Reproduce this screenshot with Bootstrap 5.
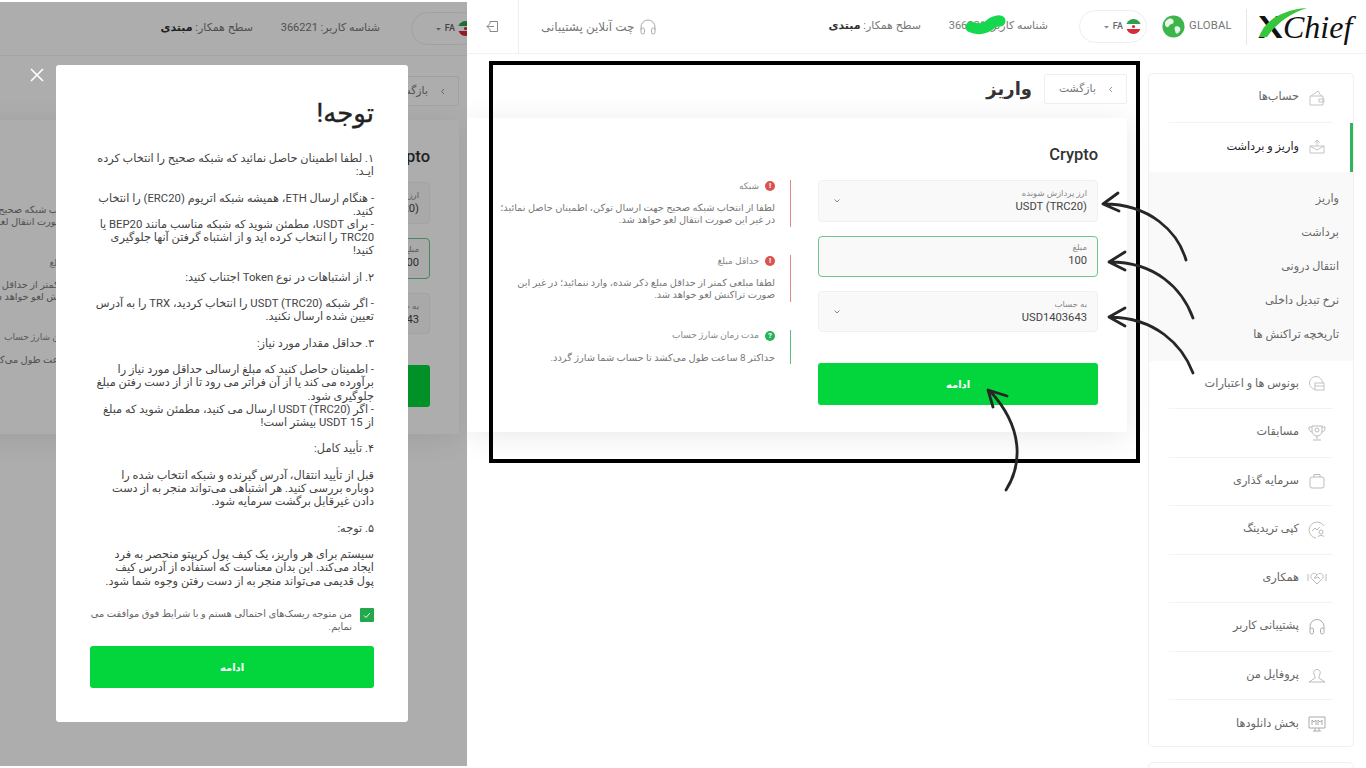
<!DOCTYPE html>
<html lang="fa">
<head>
<meta charset="UTF-8">
<meta name="viewport" content="width=device-width, initial-scale=1.0">
<title>واریز</title>
<link href="https://cdn.jsdelivr.net/npm/bootstrap@5.3.0/dist/css/bootstrap.min.css" rel="stylesheet">
<script src="https://cdn.jsdelivr.net/npm/bootstrap@5.3.0/dist/js/bootstrap.bundle.min.js"></script>
<style>
body { width:1366px; height:768px; overflow:hidden; background:#fff; font-family:Roboto,"DejaVu Sans",sans-serif; color:#777; font-size:10px; }
/* two shots of the same page side by side */
.shot-dim { width:467px; height:768px; padding-top:2px; overflow:hidden; }
.shot-dim .site { margin-left:-201px; }
.dim-layer { top:2px; bottom:2px; left:0; width:467px; background:rgba(0,0,0,.32); }
.shot-main { width:899px; height:768px; overflow:hidden; }
.site { width:899px; flex:none; }

.hdr { height:54px; border-bottom:1px solid #f2f2f2; padding-right:11px; color:#777; font-size:11px; }
.logo-box { width:97px; height:36px; direction:ltr; color:#111; white-space:nowrap; line-height:36px; }
.logo-x { display:inline-block; width:25px; font:700 31px "Liberation Sans",sans-serif; transform:scaleX(1.2); transform-origin:left; }
.logo-c { font:italic 32px "Liberation Serif",serif; }
.logo-swoosh { left:0; top:-9px; }
.hdr-sep { width:1px; height:36px; background:#e6e6e6; margin:0 11px 0 12px; }
.global-box { direction:ltr; gap:4px; font-size:11.3px; color:#777; letter-spacing:.2px; margin-left:15px; width:72px; }
.lang-pill { width:68px; height:33px; border:1px solid #eee; border-radius:17px; direction:ltr; font-size:9px; font-weight:500; color:#666; gap:3px; margin-left:31px; padding-right:5px; justify-content:flex-end; }
.hdr-id { width:100px; white-space:nowrap; margin-left:27px; }
.hdr-level { width:90px; white-space:nowrap; }
.hdr-level b { color:#333; }
.hdr-chat { gap:5px; white-space:nowrap; margin-left:22px; font-size:12px; }
.hdr-out { width:52px; height:54px; border-right:1px solid #eee; }

.body-row { padding-right:12px; padding-top:19px; }
.side-col { width:206px; flex:none; margin-left:21px; }
.side-box { border:1px solid #f0f0f0; border-radius:5px; background:#fff; height:674px; }
.side-box2 { border:1px solid #f0f0f0; border-radius:5px; height:30px; margin-top:15px; }
.side-item { height:48.5px; margin:0 20px; gap:8px; padding-right:6px; font-size:11.3px; color:#666; border-bottom:1px solid #f3f3f3; }
.side-item:last-child { border-bottom:0; }
.side-item svg { flex:none; }
.side-on { height:49px; margin:0; padding-right:26px; border:0; color:#222; }
.side-mark { right:0; top:0; bottom:0; width:3px; background:#2fb457; }
.side-sub { background:#f9f9f9; height:189px; padding:10px 14px 0 0; font-size:11.2px; color:#666; }
.side-sub div { height:34px; line-height:34px; }
.cont-col { width:660px; flex:none; padding-top:1px; }
.back-btn { width:83px; height:30px; border:1px solid #eee; border-radius:2px; background:#fff; padding:0 12px 0 14px; font-size:10.8px; color:#777; }
.page-title { font-size:18px; font-weight:700; color:#333; margin:0 12px 0 0; }
.pay-card { background:#fff; height:314px; margin-top:14px; padding:27px 29px 0 0; box-shadow:0 4px 30px rgba(0,0,0,.09); border-radius:2px; }
.card-name { font-size:16.5px; font-weight:500; color:#333; text-align:right; margin:0 0 15px; line-height:20px; direction:ltr; }
.form-col { width:280px; flex:none; margin-left:27px; }
.fake-field { height:41px; margin-bottom:14px; background:#f9f9f9; border:1px solid #f0f0f0; border-radius:4px; padding:5px 10px; }
.fake-field:first-child { height:42px; }
.fake-field.is-on { border-color:#6fc58a; }
.fld-txt { text-align:right; }
.fld-lab { font-size:8.5px; color:#888; line-height:11px; }
.fld-val { font-size:11.2px; color:#444; line-height:15px; direction:ltr; }
.go-btn { background:#03d63c; color:#fff; font-size:10px; font-weight:700; border:0; border-radius:3px; height:42px; width:100%; }
.go-btn:hover { background:#03d63c; color:#fff; }
.form-col .go-btn { margin-top:17px; }
.info-col { width:292px; flex:none; }
.info-item { padding-right:15px; text-align:right; border-right:1px solid #d98a8a; margin-bottom:28px; font-size:9.8px; line-height:12.4px; white-space:nowrap; color:#777; }
.info-item.is-ok { border-right-color:#5cbf7e; margin-bottom:0; }
.info-head { gap:6px; font-size:9px; color:#888; height:12px; margin-bottom:10px; }
.info-dot { width:10px; height:10px; border-radius:50%; background:#d9534f; color:#fff; font:700 8px/10px Roboto,sans-serif; text-align:center; flex:none; }
.is-ok .info-dot { background:#22b455; }

.notice-box { left:56px; top:65px; width:352px; height:657px; background:#fff; border-radius:3px; padding:32px 34px 0; text-align:right; }
.notice-title { font-size:26px; font-weight:400; color:#222; margin:0 0 23px; line-height:32px; -webkit-text-stroke:.4px #222; }
.notice-text { font-size:11.3px; line-height:13.2px; color:#444; white-space:nowrap; height:455px; }
.notice-agree { gap:8px; font-size:9.9px; line-height:13px; color:#666; margin-bottom:5px; height:34px; white-space:nowrap; }
.notice-check { width:14px; height:14px; background:#22a94c; border-radius:1px; flex:none; margin-top:1px; }
.notice-x { left:29px; top:67px; }
.marks { left:0; top:0; pointer-events:none; }
</style>
</head>
<body class="d-flex position-relative">

<div class="shot-dim position-relative" id="shotDim"></div>

<div class="shot-main" id="shotMain">
  <div class="site" id="sitePage" dir="rtl">
    <header class="hdr d-flex align-items-center">
      <div class="logo-box position-relative">
        <span class="logo-x">X</span><span class="logo-c">Chief</span>
        <svg class="logo-swoosh position-absolute" width="60" height="44" viewBox="0 0 60 44"><path d="M1 37C6 22 22 10 49 8C32 13 18 24 9 37Z" fill="#35c63b"/></svg>
      </div>
      <div class="hdr-sep"></div>
      <div class="global-box d-flex align-items-center">
        <svg width="23" height="23" viewBox="0 0 24 24"><circle cx="12" cy="12" r="11.5" fill="#3cb54a"/><path d="M7 4C10 3 13 5 12 8C11 10 8 9 7 12C6 14 3 12 3 9C3 7 5 5 7 4ZM14 12C17 11 20 13 19 16C18 19 15 21 14 18C14 16 12 14 14 12Z" fill="#e9f7ea"/></svg>
        <span>GLOBAL</span>
      </div>
      <div class="lang-pill d-flex align-items-center">
        <svg width="7" height="6" viewBox="0 0 7 6"><path d="M1 2L3.5 4.5L6 2Z" fill="#888"/></svg>
        <span>FA</span>
        <svg width="15" height="15" viewBox="0 0 15 15"><clipPath id="flagc"><circle cx="7.5" cy="7.5" r="7.5"/></clipPath><g clip-path="url(#flagc)"><rect width="15" height="5" fill="#2aa24a"/><rect y="5" width="15" height="5" fill="#fff"/><rect y="10" width="15" height="5" fill="#d6293a"/><circle cx="7.5" cy="7.5" r="1.6" fill="#d6293a"/></g></svg>
      </div>
      <div class="hdr-id">شناسه کاربر: 366221</div>
      <div class="hdr-level">سطح همکار: <b>مبتدی</b></div>
      <div class="hdr-chat d-flex align-items-center me-auto">
        <svg width="18" height="18" viewBox="0 0 18 18" fill="none" stroke="#aaa"><path d="M2 12V9a7 7 0 0 1 14 0v3"/><rect x="2" y="10" width="3.5" height="6" rx="1.7"/><rect x="12.5" y="10" width="3.5" height="6" rx="1.7"/></svg>
        <span>چت آنلاین پشتیبانی</span>
      </div>
      <div class="hdr-out d-flex align-items-center justify-content-center">
        <svg width="13" height="13" viewBox="0 0 13 13" fill="none" stroke="#888"><path d="M4 1.5H11.5V11.5H4V9M4 4V1.5M8 6.5H1M3.5 4L1 6.5L3.5 9"/></svg>
      </div>
    </header>

    <div class="body-row d-flex">
      <aside class="side-col">
        <div class="side-box">
          <div class="side-item d-flex align-items-center">
            <svg width="20" height="20" viewBox="0 0 20 20" fill="none" stroke="#c4c4c4"><path d="M4 8L11 3L14 8M3 8H16V17H3ZM12 11H17V14H12Z"/></svg>
            <span>حساب‌ها</span>
          </div>
          <div class="side-item side-on d-flex align-items-center position-relative">
            <svg width="20" height="20" viewBox="0 0 20 20" fill="none" stroke="#c4c4c4"><path d="M3 9H17V16H3ZM3 9L10 13L17 9M10 9V3M7.5 5.5L10 3L12.5 5.5"/></svg>
            <span>واریز و برداشت</span>
            <span class="side-mark position-absolute"></span>
          </div>
          <div class="side-sub">
            <div>واریز</div>
            <div>برداشت</div>
            <div>انتقال درونی</div>
            <div>نرخ تبدیل داخلی</div>
            <div>تاریخچه تراکنش ها</div>
          </div>
          <div class="side-item d-flex align-items-center">
            <svg width="20" height="20" viewBox="0 0 20 20" fill="none" stroke="#c4c4c4"><circle cx="9" cy="9" r="6.5"/><rect x="8" y="9" width="9" height="7" fill="#fff"/><path d="M8 12H17"/></svg>
            <span>بونوس ها و اعتبارات</span>
          </div>
          <div class="side-item d-flex align-items-center">
            <svg width="20" height="20" viewBox="0 0 20 20" fill="none" stroke="#bbb"><path d="M5 3H15V8A5 5 0 0 1 5 8ZM5 4H2V6C2 8 4 9 5 9M15 4H18V6C18 8 16 9 15 9M10 13V16M6 17H14"/><circle cx="10" cy="7" r="2"/></svg>
            <span>مسابقات</span>
          </div>
          <div class="side-item d-flex align-items-center">
            <svg width="20" height="20" viewBox="0 0 20 20" fill="none" stroke="#bbb"><rect x="3" y="6" width="14" height="11" rx="2"/><path d="M7 6V3.5H13V6"/></svg>
            <span>سرمایه گذاری</span>
          </div>
          <div class="side-item d-flex align-items-center">
            <svg width="20" height="20" viewBox="0 0 20 20" fill="none" stroke="#bbb"><path d="M17 6A8 8 0 1 0 9 18M5 11L8 8L10 10L13 7"/><circle cx="14" cy="12" r="2"/><path d="M11 17C11 15 17 15 17 17"/></svg>
            <span>کپی تریدینگ</span>
          </div>
          <div class="side-item d-flex align-items-center">
            <svg width="20" height="20" viewBox="0 0 20 20" fill="none" stroke="#bbb"><path d="M1 6V13M19 6V13M10 16L4.5 10.5C2 7 7 3 10 7C13 3 18 7 15.5 10.5ZM10 7L7 10H9L11 9L13 11"/></svg>
            <span>همکاری</span>
          </div>
          <div class="side-item d-flex align-items-center">
            <svg width="20" height="20" viewBox="0 0 20 20" fill="none" stroke="#aaa"><path d="M3 12V9.5a7 7 0 0 1 14 0V12"/><rect x="3" y="11" width="3.5" height="6" rx="1.7"/><rect x="13.5" y="11" width="3.5" height="6" rx="1.7"/></svg>
            <span>پشتیبانی کاربر</span>
          </div>
          <div class="side-item d-flex align-items-center">
            <svg width="20" height="20" viewBox="0 0 20 20" fill="none" stroke="#bbb"><path d="M7 9C5 3 15 3 13 9C12.500 11 11.500 12 12 13L18 17H2L8 13C8.500 12 7.500 11 7 9Z"/></svg>
            <span>پروفایل من</span>
          </div>
          <div class="side-item d-flex align-items-center">
            <svg width="20" height="20" viewBox="0 0 20 20" fill="none" stroke="#aaa"><path d="M2 3H18V14H2ZM8 14V17M12 14V17M6 17H14M5 11V6L7 8L9 6V11M11 11V6L13 8L15 6V11"/></svg>
            <span>بخش دانلودها</span>
          </div>
        </div>
        <div class="side-box2"></div>
      </aside>

      <main class="cont-col">
        <div class="d-flex align-items-center">
          <a class="back-btn d-flex align-items-center justify-content-between text-decoration-none">
            <svg width="6" height="7" viewBox="0 0 6 7" fill="none" stroke="#999"><path d="M4 1L1.500 3.500L4 6"/></svg>
            <span>بازگشت</span>
          </a>
          <h1 class="page-title">واریز</h1>
        </div>
        <section class="pay-card">
          <h2 class="card-name">Crypto</h2>
          <div class="d-flex">
            <div class="form-col">
              <div class="fake-field d-flex align-items-center justify-content-between">
                <div class="fld-txt"><div class="fld-lab">ارز پردازش شونده</div><div class="fld-val">USDT (TRC20)</div></div>
                <svg class="ms-1" width="8" height="6" viewBox="0 0 8 6" fill="none" stroke="#888"><path d="M1.500 1.500L4 4L6.500 1.500"/></svg>
              </div>
              <div class="fake-field is-on">
                <div class="fld-txt"><div class="fld-lab">مبلغ</div><div class="fld-val">100</div></div>
              </div>
              <div class="fake-field d-flex align-items-center justify-content-between">
                <div class="fld-txt"><div class="fld-lab">به حساب</div><div class="fld-val">USD1403643</div></div>
                <svg class="ms-1" width="8" height="6" viewBox="0 0 8 6" fill="none" stroke="#888"><path d="M1.500 1.500L4 4L6.500 1.500"/></svg>
              </div>
              <button class="btn go-btn" type="button">ادامه</button>
            </div>
            <div class="info-col">
              <div class="info-item">
                <div class="info-head d-flex align-items-center"><span class="info-dot">!</span><span>شبکه</span></div>
                لطفا از انتخاب شبکه صحیح جهت ارسال توکن، اطمینان حاصل نمائید؛<br>در غیر این صورت انتقال لغو خواهد شد.
              </div>
              <div class="info-item">
                <div class="info-head d-flex align-items-center"><span class="info-dot">!</span><span>حداقل مبلغ</span></div>
                لطفا مبلغی کمتر از حداقل مبلغ ذکر شده، وارد ننمائید؛ در غیر این<br>صورت تراکنش لغو خواهد شد.
              </div>
              <div class="info-item is-ok">
                <div class="info-head d-flex align-items-center"><span class="info-dot">?</span><span>مدت زمان شارژ حساب</span></div>
                حداکثر 8 ساعت طول می‌کشد تا حساب شما شارژ گردد.
              </div>
            </div>
          </div>
        </section>
      </main>
    </div>
  </div>
</div>

<div class="dim-layer position-absolute"></div>

<div class="notice-box position-absolute" dir="rtl">
  <h3 class="notice-title">توجه!</h3>
  <div class="notice-text">
    ۱. لطفا اطمینان حاصل نمائید که شبکه صحیح را انتخاب کرده<br>ایـد:<br><br>
    - هنگام ارسال ETH، همیشه شبکه اتریوم (ERC20) را انتخاب<br>کنید.<br>
    - برای USDT، مطمئن شوید که شبکه مناسب مانند BEP20 یا<br>TRC20 را انتخاب کرده اید و از اشتباه گرفتن آنها جلوگیری<br>کنید!<br><br>
    ۲. از اشتباهات در نوع Token اجتناب کنید:<br><br>
    - اگر شبکه (USDT (TRC20 را انتخاب کردید، TRX را به آدرس<br>تعیین شده ارسال نکنید.<br><br>
    ۳. حداقل مقدار مورد نیاز:<br><br>
    - اطمینان حاصل کنید که مبلغ ارسالی حداقل مورد نیاز را<br>برآورده می کند یا از آن فراتر می رود تا از از دست رفتن مبلغ<br>جلوگیری شود.<br>
    - اگر (USDT (TRC20 ارسال می کنید، مطمئن شوید که مبلغ<br>از 15 USDT بیشتر است!<br><br>
    ۴. تأیید کامل:<br><br>
    قبل از تأیید انتقال، آدرس گیرنده و شبکه انتخاب شده را<br>دوباره بررسی کنید. هر اشتباهی می‌تواند منجر به از دست<br>دادن غیرقابل برگشت سرمایه شود.<br><br>
    ۵. توجه:<br><br>
    سیستم برای هر واریز، یک کیف پول کریپتو منحصر به فرد<br>ایجاد می‌کند. این بدان معناست که استفاده از آدرس کیف<br>پول قدیمی می‌تواند منجر به از دست رفتن وجوه شما شود.
  </div>
  <div class="notice-agree d-flex">
    <span class="notice-check d-flex align-items-center justify-content-center">
      <svg width="8" height="7" viewBox="0 0 8 7" fill="none" stroke="#fff"><path d="M1 3.500L3 5.500L7 1"/></svg>
    </span>
    <span>من متوجه ریسک‌های احتمالی هستم و با شرایط فوق موافقت می<br>نمایم.</span>
  </div>
  <button class="btn go-btn" type="button">ادامه</button>
</div>

<svg class="notice-x position-absolute" width="16" height="16" viewBox="0 0 16 16" stroke="#fff" stroke-width="1.600"><path d="M2 2L14 14M14 2L2 14"/></svg>

<svg class="marks position-absolute" width="1366" height="768" viewBox="0 0 1366 768" fill="none">
  <path d="M971 27C980 31 988 27 992 23C996 21 999 20 1000 21" stroke="#15d84e" stroke-width="11" stroke-linecap="round"/>
  <rect x="491" y="63" width="647" height="398" stroke="#000" stroke-width="4"/>
  <g stroke="#262626" stroke-width="2.800" stroke-linecap="round" stroke-linejoin="round">
    <path d="M1186 260C1178 232 1150 204 1104 204M1118 193L1103 204L1119 211"/>
    <path d="M1193 318C1182 288 1155 262 1110 262M1125 252L1109 262L1125 270"/>
    <path d="M1193 373C1182 344 1155 318 1110 317M1125 308L1109 317L1125 326"/>
    <path d="M1006 490C1022 465 1024 428 990 391M1007 396L988 390L993 407"/>
  </g>
</svg>

<script>
  // left shot is the same page, dimmed behind the notice
  var copy = document.getElementById('sitePage').cloneNode(true);
  copy.removeAttribute('id');
  document.getElementById('shotDim').appendChild(copy);
</script>
</body>
</html>
